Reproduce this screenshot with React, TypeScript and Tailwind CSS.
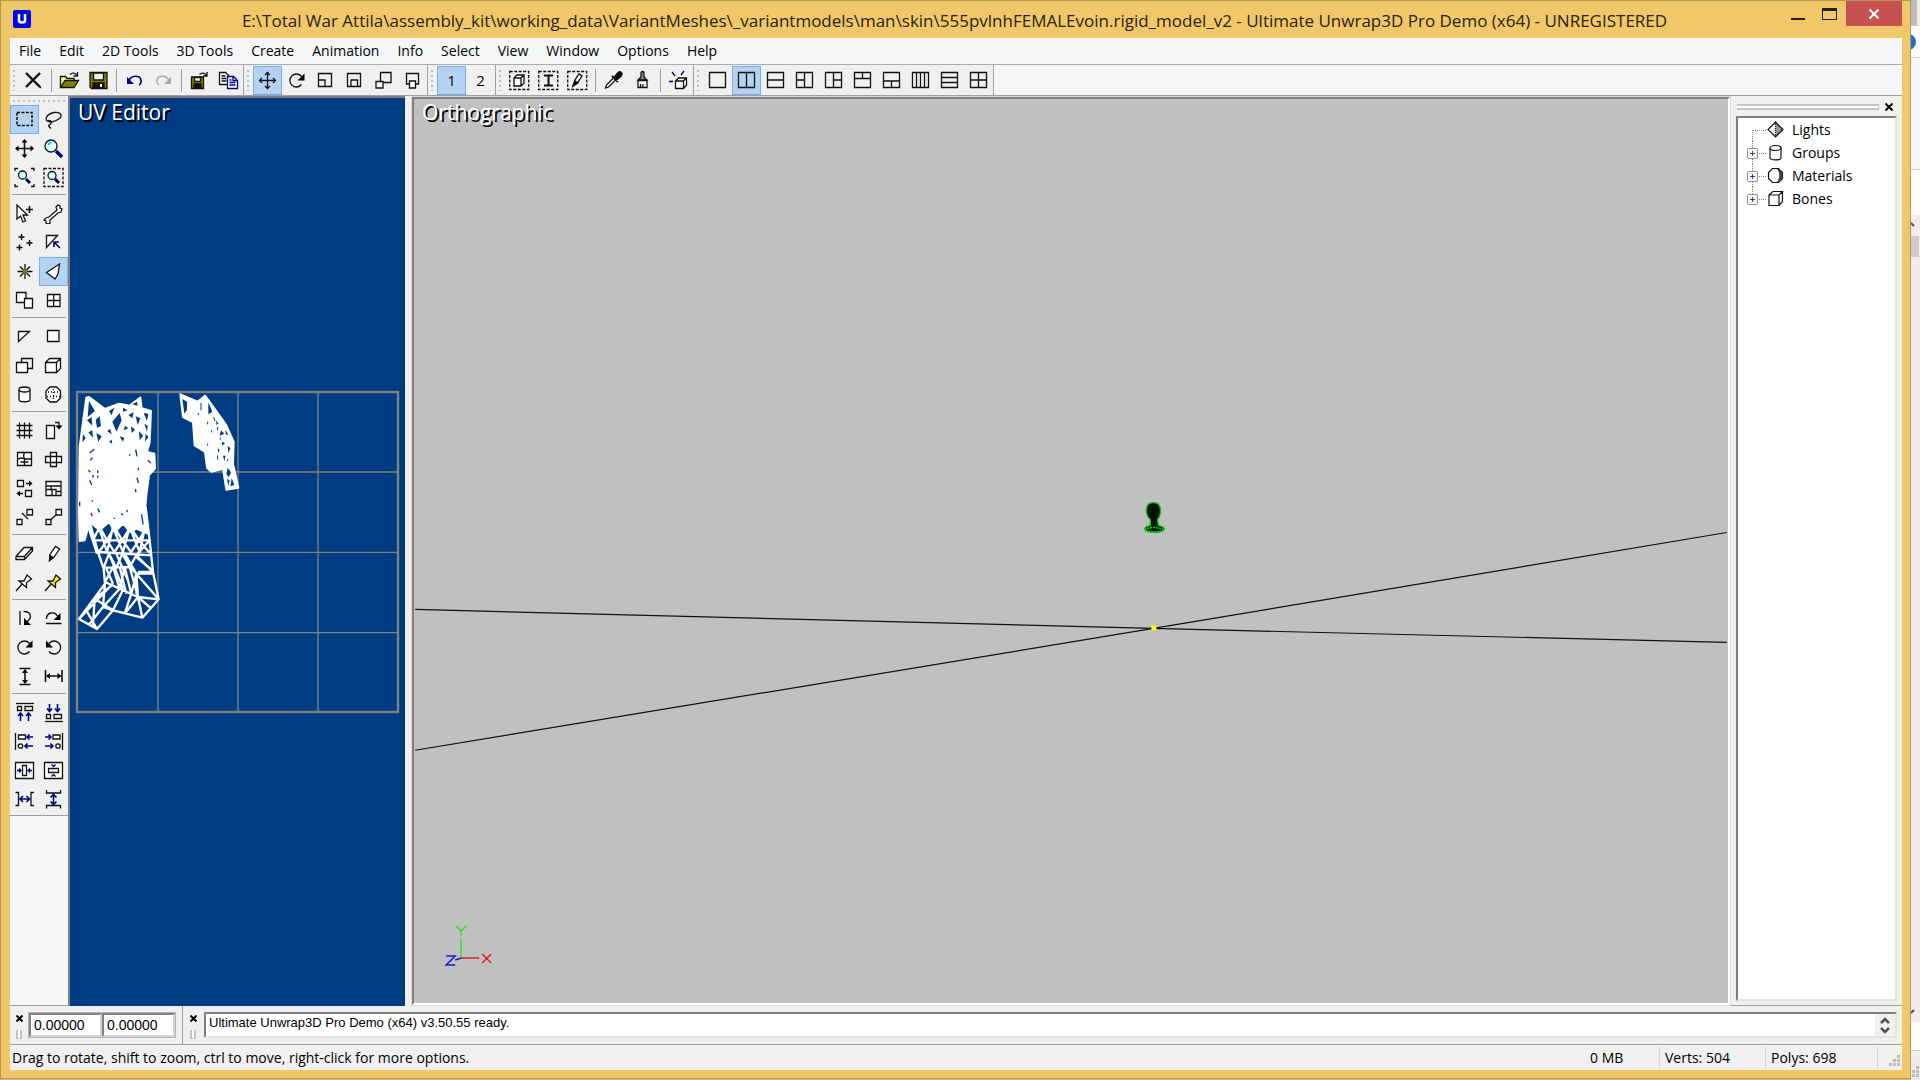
import { ReactNode, useState } from "react";

const UI_FONT = "font-['Open_Sans','Noto_Sans',sans-serif]";

const menus = [
  "File",
  "Edit",
  "2D Tools",
  "3D Tools",
  "Create",
  "Animation",
  "Info",
  "Select",
  "View",
  "Window",
  "Options",
  "Help",
];

const NAVY = "#00007f";
const OLIVE = "#808000";

// every icon is drawn on a 21x21 grid
const icons: Record<string, ReactNode> = {
  delete: (
    <>
      <path d="M3 3L17 17M17 3L3 17" strokeWidth="2.4" />
      <path d="M16 16l2 2" />
    </>
  ),
  open: (
    <>
      <path d="M1.5 17V6.500h5l1.500 2h7v2" fill="#ffff99" />
      <path d="M1.500 17.500L6 10.500h13.500L15 17.500z" fill={OLIVE} />
      <path d="M11 4.500c2-2 5-2 7 1M18.500 2v4h-4" />
    </>
  ),
  save: (
    <>
      <path d="M2 2.500h17v16H3.500L2 17z" fill={OLIVE} />
      <path d="M5.500 3h10v7h-10z" fill="#f0f0f0" />
      <path d="M5 13h11v5H5z" fill="#111" />
      <path d="M13 14v3" stroke="#fff" strokeWidth="2" />
    </>
  ),
  undo: (
    <>
      <path d="M5 10c3-5 11-5 12 0c.5 2-.5 4-2 5" stroke={NAVY} strokeWidth="1.6" />
      <path d="M3 7v7h7z" fill={NAVY} stroke="none" />
    </>
  ),
  redo: (
    <>
      <path d="M16 10c-3-5-11-5-12 0c-.5 2 .5 4 2 5" stroke="#a8a8a8" strokeWidth="1.4" />
      <path d="M18 7v7h-7z" fill="#a8a8a8" stroke="none" />
    </>
  ),
  saveAs: (
    <>
      <path d="M2.500 7h12v11.500h-12z" fill={OLIVE} />
      <path d="M5.500 7.500h6v4h-6z" fill="#f0f0f0" />
      <path d="M5 14h7v4H5z" fill="#111" />
      <path d="M10.500 4.500c2-2 5-2 7 1M18 2v4h-4" />
    </>
  ),
  copy: (
    <>
      <path d="M1.500 2.500h6l3 3v9h-9z" fill="#fff" />
      <path d="M3.500 6h4M3.500 8.500h5M3.500 11h5" />
      <path d="M9.500 6.500h6l4 4v8h-10z" fill="#fff" stroke={NAVY} />
      <path d="M15 6.500v4h4M11.500 10h2M11.500 12.500h6M11.500 15h6" stroke={NAVY} />
    </>
  ),
  move: (
    <>
      <path d="M10.500 3v15M3 10.500h15" />
      <path d="M8 5l2.500-2.500L13 5M8 16l2.500 2.500L13 16M5 8l-2.500 2.500L5 13M16 8l2.500 2.500L16 13" />
    </>
  ),
  rotate: (
    <>
      <path d="M15.500 14.500a6.500 6.500 0 1 1 0-8" />
      <path d="M18.500 3.500v7h-7z" fill="#000" stroke="none" />
    </>
  ),
  scaleCorner: <path d="M3.500 3.500h13v13h-13zM3.500 10h6.500v6.500" />,
  scaleInner: <path d="M3.500 3.500h13v13h-13zM7 16.500V10h6.500v6.500" />,
  scaleOut: (
    <>
      <path d="M7.500 2.500h10.500v10H7.500z" />
      <path d="M3 11.500h7v6.500H3z" fill="#fff" />
    </>
  ),
  scaleDown: (
    <>
      <path d="M4.500 3.500h12v10.500h-12z" />
      <path d="M7.500 11h6v7h-6z" fill="#fff" />
    </>
  ),
  selCube: (
    <>
      <path d="M.7 1.500h19v18h-19z" strokeDasharray="3 1.500" />
      <path d="M5 8l3-3h7v8l-3 3H5zM5 8h7v8M12 8l3-3" fill="#fff" />
    </>
  ),
  selEdge: (
    <>
      <path d="M.7 1.500h19v18h-19z" strokeDasharray="3 1.500" />
      <path d="M6 5.500h9M10.500 5.500v10M6 15.500h9" strokeWidth="2" />
    </>
  ),
  selPaint: (
    <>
      <path d="M.7 1.500h19v18h-19z" strokeDasharray="3 1.500" />
      <path d="M6 16l2-6 4-6 3 2-4 6z" fill="#fff" />
      <path d="M6 16l2-5 3 2z" fill="#000" />
    </>
  ),
  picker: (
    <>
      <path d="M2.500 18l1-3 7-7 2 2-7 7z" fill="#fff" />
      <path d="M9 6l6 6M11 8l4-5c2-2 5 0 3 3l-5 4z" fill="#000" strokeWidth="2" />
    </>
  ),
  brush: (
    <>
      <path d="M9 7V3c0-2 3-2 3 0v4l3 3H6z" fill="#888" />
      <path d="M6 10.500h9v7H6z" fill="#fff" />
      <path d="M8.500 14v3M11 14v3" />
    </>
  ),
  explode: (
    <>
      <path d="M7.500 11l3-3h8v7l-3 3.500h-8zM7.500 11h8v7.500M15.500 11l3-3" fill="#fff" />
      <path d="M1 11.500h4M4 2l3 4M16 1l-3 4" stroke={NAVY} />
    </>
  ),
  lay1: <path d="M2.500 2.500h16v15h-16z" />,
  lay2: <path d="M2.500 2.500h16v15h-16zM10.500 2.500v15" />,
  lay3: <path d="M2.500 2.500h16v15h-16zM2.500 10h16" />,
  lay4: <path d="M2.500 2.500h16v15h-16zM10.500 2.500v15M2.500 10h8" />,
  lay5: <path d="M2.500 2.500h16v15h-16zM10.500 2.500v15M10.500 10h8" />,
  lay6: <path d="M2.500 2.500h16v15h-16zM2.500 8.500h16M10.500 2.500v6" />,
  lay7: <path d="M2.500 2.500h16v15h-16zM2.500 11h16M10.500 11v6.500" />,
  lay8: <path d="M2.500 2.500h16v15h-16zM6.500 2.500v15M10.500 2.500v15M14.500 2.500v15" />,
  lay9: <path d="M2.500 2.500h16v15h-16zM2.500 7.500h16M2.500 12.500h16" />,
  lay10: <path d="M2.500 2.500h16v15h-16zM10.500 2.500v15M2.500 10h16" />,
  marquee: <path d="M3 3.500h15v13H3z" strokeDasharray="3 1.400" strokeWidth="1.500" />,
  lasso: (
    <path d="M7 13c-7-1-4-8 4-9.500c8-1 9 4 4 7c-3 2-8 3-9 2c-2-2 4-1 2 2c-1 2-3 1-2 3l2 2" />
  ),
  pan: (
    <>
      <path d="M10.500 2v17M2 10.500h17" strokeWidth="1.600" />
      <path d="M7.500 4.500h6l-3-3.500zM7.500 16.500h6l-3 3.500zM4.500 7.500v6L1 10.500zM16.500 7.500v6l3.500-3z" fill="#000" stroke="none" />
    </>
  ),
  zoom: (
    <>
      <circle cx="8" cy="8" r="6" fill="#e8ffff" />
      <path d="M5 7l3-3" stroke="#00d0d8" strokeWidth="2" />
      <path d="M13 13l6 6" stroke={NAVY} strokeWidth="3.400" />
    </>
  ),
  zoomFit: (
    <>
      <path d="M1 4V1.500h3M17 1.500h3V4M1 17v2.500h3M17 19.500h3V17" />
      <circle cx="8.500" cy="8" r="4" fill="#c8ffff" />
      <path d="M12 12l4 4" stroke={NAVY} strokeWidth="3" />
    </>
  ),
  zoomSel: (
    <>
      <path d="M1 1.500h19v18H1z" strokeDasharray="3 1.500" />
      <circle cx="9" cy="8.500" r="4" fill="#c8ffff" />
      <path d="M12 12l4 4" stroke={NAVY} strokeWidth="3" />
    </>
  ),
  arrowPlus: (
    <>
      <path d="M3 2v14l3.500-3 2.500 6 2.500-1-2.500-6h4.500z" fill="#fff" />
      <path d="M15.500 3v7M12 6.500h7" strokeWidth="1.600" />
    </>
  ),
  bone: (
    <path
      d="M3 15l3-1 8-7-1-3 2-2 2 1 0 2 2 1-1 3-3 1-8 7 0 3-2 1-2-1 0-2-2-1z"
      fill="#fff"
    />
  ),
  points: <path d="M7.500 2v6M4.500 5h6M5.500 12.500v6M2.500 15.500h6M15.500 8v6M12.500 11h6" strokeWidth="1.500" />,
  triPick: (
    <>
      <path d="M3.500 15.500v-12h11z" fill="#fff" />
      <path d="M17 16l-5-5M11 15v-5h5" stroke={NAVY} strokeWidth="1.600" />
    </>
  ),
  star: (
    <>
      <path d="M11 3v15M3.500 10.500h15M6 5.500l10 10M16 5.500l-10 10" />
      <circle cx="11" cy="10.500" r="2.200" fill={OLIVE} stroke="none" />
    </>
  ),
  face: <path d="M3.500 11.500L16.500 3l-1.500 10-3 5z" fill="#fff" />,
  overlap: (
    <>
      <path d="M2.500 2.500h9.500v10H2.500z" fill="#fff" />
      <path d="M10.500 8.500h8v9.500h-8z" fill="#fff" />
    </>
  ),
  grid4: <path d="M4.500 4.500h12.500v12H4.500zM10.700 4.500v12M4.500 10.500h12.500" fill="#fff" />,
  tri: <path d="M4.500 15.500v-10h11z" fill="#fff" />,
  square: <path d="M4.500 4.500H16v11H4.500z" fill="#fff" />,
  stack: (
    <>
      <path d="M7.500 3.500h11v10h-11z" />
      <path d="M2.500 7.500h11v10h-11z" fill="#fff" />
    </>
  ),
  cube: <path d="M2.500 7.500l4-4h11v10l-4 4h-11zM2.500 7.500h11v10M13.500 7.500l4-4" fill="#fff" />,
  cyl: (
    <>
      <path d="M5 5.500v10c0 3 11 3 11 0v-10" fill="#fff" />
      <ellipse cx="10.500" cy="5.500" rx="5.500" ry="2.500" fill="#fff" />
    </>
  ),
  sphere: (
    <>
      <path d="M7 3h6.500l4 4v7l-4 4H7l-4-4V7z" fill="#fff" />
      <path d="M5 8h12M10.500 5v13M4 12.500h13" strokeDasharray="1 2" />
    </>
  ),
  hash: <path d="M2.500 5.500h16M2.500 10.500h16M2.500 15.500h16M5.500 2.500v16M10.500 2.500v16M15.500 2.500v16" />,
  sendRight: (
    <>
      <path d="M3.500 5.500h8v13h-8z" fill="#fff" />
      <path d="M12 2.500h4v5" />
      <path d="M12.500 5.500h7l-3.500 4z" fill="#000" stroke="none" />
    </>
  ),
  planar: <path d="M3.500 3.500h14v13h-14zM3.500 10l4-1 3 1h7M10.500 3.500l-1 3 1 4v6M6.500 13h8" fill="#fff" />,
  cross: <path d="M7.500 3.500h6v14h-6zM2.500 7.500h16v6h-16z" fill="#fff" />,
  swap: (
    <>
      <path d="M3.500 2.500h6v6h-6zM11.500 12.500h6v6h-6z" fill="#fff" />
      <path d="M12 5.500h5M4 15.500h5" strokeWidth="1.600" />
      <path d="M15 2.500v6l3.500-3zM6 12.500v6l-3.500-3z" fill="#000" stroke="none" />
    </>
  ),
  pack: <path d="M3 3.500h15v14H3zM3 8h15M3 11.500h6v6M9 11.500h4v6M13 13.500h5M8 8v3.500" fill="#fff" />,
  split: (
    <>
      <path d="M3 12.500h5v5H3zM13 2.500h5.500v5.500H13z" fill="#fff" />
      <path d="M8 6l6 6" />
    </>
  ),
  link: (
    <>
      <path d="M3 12.500h5v5H3zM13 2.500h5.500v5.500H13z" fill="#fff" />
      <path d="M8 12.500L13 8" />
    </>
  ),
  eraser: (
    <path d="M2 13.500l8-9h8.500v3.500l-8 8.500H2zM2 13.500h8.500v3M10.500 13.500l8-9" fill="#fff" />
  ),
  pencil: (
    <>
      <path d="M6.500 17.500l.5-6L12.500 3.500l4 2.500-5.500 8z" fill="#fff" />
      <path d="M6.500 17.500l.5-5 3 2z" fill="#000" />
    </>
  ),
  pin: (
    <>
      <path d="M2 19l7-8" />
      <path d="M5 9h5l3-6 4.500 4-5 3.500v5z" fill="#fff" />
    </>
  ),
  pinYellow: (
    <>
      <path d="M2 19l7-8" />
      <path d="M5 9h5l3-6 4.500 4-5 3.500v5z" fill="#ffee00" />
    </>
  ),
  flipV: (
    <>
      <path d="M6 3v14M9.500 3.500c5 0 7 2 7 5s-2 3-4 6" />
      <path d="M10 10v7h7z" fill="#000" stroke="none" />
    </>
  ),
  flipH: (
    <>
      <path d="M3 15.500h15.500M3.500 11c0-7 8-8 11-3" />
      <path d="M17.500 5v7h-7z" fill="#000" stroke="none" />
    </>
  ),
  rotCcw: (
    <>
      <path d="M6 14.500a6.500 6.500 0 1 0 0-8" />
      <path d="M3 3.500v7h7z" fill="#000" stroke="none" />
    </>
  ),
  sizeV: (
    <>
      <path d="M5.500 2.500h11M5.500 18.500h11M11 4v13" strokeWidth="1.600" />
      <path d="M8 7h6l-3-4zM8 14h6l-3 4z" fill="#000" stroke="none" />
    </>
  ),
  sizeH: (
    <>
      <path d="M2.500 4v12M19 4v12M4 10h13" strokeWidth="1.600" />
      <path d="M7 7v6l-4-3zM14.500 7v6l4-3z" fill="#000" stroke="none" />
    </>
  ),
  alignTop: (
    <>
      <path d="M2 1.500h18" />
      <path d="M3.500 4.500h4v4h-4zM11 4.500h7.500v4H11z" fill="#fff" />
      <path d="M6.500 12v7M14.500 12v7M4 14l2.500-3 2.500 3M12 14l2.500-3 2.500 3" stroke={NAVY} strokeWidth="1.600" />
    </>
  ),
  alignBottom: (
    <>
      <path d="M2 19.500h18" />
      <path d="M3.500 12.500h4v4h-4zM11 12.500h7.500v4H11z" fill="#fff" />
      <path d="M6.500 2v7M14.500 2v7M4 6.500l2.500 3 2.500-3M12 6.500l2.500 3 2.500-3" stroke={NAVY} strokeWidth="1.600" />
    </>
  ),
  alignLeft: (
    <>
      <path d="M1.500 2v17" />
      <path d="M4.500 4h7v4h-7z" fill="#fff" />
      <circle cx="6.500" cy="15" r="2.200" fill="#fff" />
      <path d="M13 6h6M11 15h8M15.500 3.500L13 6l2.500 2.500M13.500 12.500L11 15l2.500 2.500" stroke={NAVY} strokeWidth="1.600" />
    </>
  ),
  alignRight: (
    <>
      <path d="M19.500 2v17" />
      <path d="M10 4h7v4h-7z" fill="#fff" />
      <circle cx="15" cy="15" r="2.200" fill="#fff" />
      <path d="M2 6h6M2 15h8M5.500 3.500L8 6 5.500 8.500M7.500 12.500L10 15l-2.500 2.500" stroke={NAVY} strokeWidth="1.600" />
    </>
  ),
  centerH: (
    <>
      <path d="M1.500 2.500h18v16h-18zM8.500 5.500h4v10h-4z" fill="#fff" />
      <path d="M3 10.500h3M15 10.500h3M5 8.500l2 2-2 2M16 8.500l-2 2 2 2" stroke={NAVY} />
    </>
  ),
  centerV: (
    <>
      <path d="M1.500 2.500h18v16h-18zM5.500 8.500h10v4h-10z" fill="#fff" />
      <path d="M8.500 4.500l2 2 2-2M8.500 16.500l2-2 2 2" stroke={NAVY} />
    </>
  ),
  spaceH: (
    <>
      <path d="M1.500 3.500h3v13h-3M20 3.500h-3v13h3" />
      <path d="M6 10h9M9 7l-3 3 3 3M12.500 7l3 3-3 3" stroke={NAVY} strokeWidth="1.600" />
    </>
  ),
  spaceV: (
    <>
      <path d="M3.500 1v3h14V1M3.500 19.500v-3h14v3" />
      <path d="M10.500 6v9M7.500 8.500l3-3 3 3M7.500 12.500l3 3 3-3" stroke={NAVY} strokeWidth="1.600" />
    </>
  ),
};

const Icon = ({ name }: { name: string }) => (
  <svg
    className="h-[21px] w-[21px] shrink-0"
    viewBox="0 0 21 21"
    fill="none"
    stroke="#111"
    strokeWidth="1.3"
  >
    {icons[name]}
  </svg>
);

interface ToolButtonProps {
  name: string;
  active?: boolean;
}

const ToolButton = ({ name, active }: ToolButtonProps) => (
  <button
    type="button"
    aria-label={name}
    aria-pressed={!!active}
    className={`flex h-[29px] w-[29px] shrink-0 items-center justify-center text-[15px] text-black ${
      active ? "border border-[#78aee5] bg-[#b4d3f2]" : ""
    }`}
  >
    {icons[name] ? <Icon name={name} /> : name}
  </button>
);

const Grip = () => (
  <div className="my-1 ml-[3px] mr-1 w-[2px] shrink-0 bg-[repeating-linear-gradient(to_bottom,#bdbdbd_0_2px,transparent_2px_5px)]" />
);

// "|" is a separator
const bands: string[][] = [
  ["delete", "|", "open", "save", "|", "undo", "redo", "|", "saveAs", "copy"],
  ["move", "rotate", "scaleCorner", "scaleInner", "scaleOut", "scaleDown"],
  ["1", "2"],
  ["selCube", "selEdge", "selPaint", "|", "picker", "brush", "|", "explode"],
  ["lay1", "lay2", "lay3", "lay4", "lay5", "lay6", "lay7", "lay8", "lay9", "lay10"],
];

const activeTools = ["move", "1", "lay2", "marquee", "face"];

const sideGroups: string[][] = [
  ["marquee", "lasso", "pan", "zoom", "zoomFit", "zoomSel"],
  ["arrowPlus", "bone", "points", "triPick", "star", "face", "overlap", "grid4"],
  ["tri", "square", "stack", "cube", "cyl", "sphere"],
  ["hash", "sendRight", "planar", "cross", "swap", "pack", "split", "link"],
  ["eraser", "pencil", "pin", "pinYellow"],
  ["flipV", "flipH", "rotate", "rotCcw", "sizeV", "sizeH"],
  ["alignTop", "alignBottom", "alignLeft", "alignRight", "centerH", "centerV", "spaceH", "spaceV"],
];

const TitleBar = () => (
  <header className="flex h-[37px] shrink-0 items-start">
    <svg className="mt-[9px] ml-[3px] h-[18px] w-[18px]" viewBox="0 0 18 18">
      <rect width="18" height="18" rx="2" fill="#0000e6" />
      <path d="M6 4v6.500q0 2 3 2t3-2V4" fill="none" stroke="#fff" strokeWidth="2.500" />
    </svg>
    <h1 className="flex-1 pt-[6px] pl-[96px] text-center text-[17px] leading-[28px] whitespace-nowrap text-[#2b2313]">
      E:\Total War Attila\assembly_kit\working_data\VariantMeshes\_variantmodels\man\skin\555pvlnhFEMALEvoin.rigid_model_v2
      - Ultimate Unwrap3D Pro Demo (x64) - UNREGISTERED
    </h1>
    <div className="flex">
      <button type="button" aria-label="Minimize" className="flex h-[25px] w-[31px] items-center justify-center">
        <span className="mt-[10px] h-[2px] w-[14px] bg-[#222]" />
      </button>
      <button type="button" aria-label="Maximize" className="flex h-[25px] w-[33px] items-center justify-center">
        <span className="h-[12px] w-[15px] border border-t-[3px] border-[#222]" />
      </button>
      <button type="button" aria-label="Close" className="flex h-[25px] w-[56px] items-center justify-center bg-[#c75050]">
        <svg className="h-[10px] w-[12px]" viewBox="0 0 12 10" stroke="#fff" strokeWidth="2">
          <path d="M1.500 0.500l9 9M10.500 .5l-9 9" />
        </svg>
      </button>
    </div>
  </header>
);

const SideBar = () => (
  <aside className="flex w-[58px] shrink-0 flex-col border-b border-[#a0a0a0] bg-[#f5f6f8]">
    <div className="border-b border-[#a0a0a0] bg-[#f0f0f0] pb-px">
      <div className="mx-[3px] mt-1 mb-[3px] h-[2px] bg-[repeating-linear-gradient(to_right,#bdbdbd_0_2px,transparent_2px_5px)]" />
      {sideGroups.map((group, i) => (
        <div key={i}>
          {i > 0 && <div className="mx-[2px] mt-[2px] mb-1 h-px bg-[#a0a0a0]" />}
          <div className="grid grid-cols-2">
            {group.map((name) => (
              <ToolButton key={name} name={name} active={activeTools.includes(name)} />
            ))}
          </div>
        </div>
      ))}
    </div>
  </aside>
);

const bodyHoles =
  "M58 62l18 30-22 18zM52 120l14-10 2 26zM78 118l12-10 4 30-12 4zM40 160l8 14-10 12zM56 156l12-6 2 22zM80 158l16 10-10 16zM118 92l16-10-8 22zM128 124l22-26 6 22-16 34zM112 152l10-6 4 16zM160 82l14 8-14 4zM188 72l14-8 2 12zM176 104l16-8-4 18zM198 108l14 6-8 20zM222 98l14 2-4 22zM224 130l10 6-2 18zM208 152l12 14-10 14zM184 138l12 10-10 10zM166 136l10 8-14 6zM150 168l14 4-4 12zM118 184l8-6 2 12zM228 160l8 10-10 14z";

const bodySpecks =
  "M60 218l14-12M62 240l6-8M56 270l6 6M60 300l6 14M70 284v8M84 270v8M84 286v6M198 208l4 20M180 222v4M206 262v8M202 292l4 16M198 326v10M234 240l10 8M30 364v14M68 360v4M84 384l6 12M172 388v8M154 400l6 4M134 412v4M64 398l4 10M216 402l4 30";

// shin and foot part of the unwrapped body
const legWire =
  "M60 425L85 515L102 565L106 610L28 716L82 746L130 690L218 712L267 657L250 575L240 480L228 380M50 420L82 520M70 480H240M88 515L246 525M102 562L180 560L200 580H250M106 605L150 625L205 650L267 657M84 430L112 515L130 440L160 515L180 440L210 515L226 440M70 480L90 440L112 480L134 440L158 480L182 440L208 480L228 445M88 515L112 480L134 515L158 480L184 515L208 480L240 518M102 562L118 520L140 562L158 520L180 560L200 525L250 575M106 605L130 560L150 625L165 560L185 640L200 580L205 650L218 712M118 520L160 625M140 520L175 600M165 520L200 580V640M200 580L267 657M110 565L130 610M150 560L170 640M180 560L205 650M200 530L250 572M106 605L100 680L130 690M130 612L75 655L70 735M150 625L100 680L60 730M160 628L130 690L82 746M185 640L165 700M205 650L165 700M205 650L245 685M28 716L120 620M75 655L130 690M50 690L82 746M240 480L200 525M250 575H205";

const UvEditor = () => (
  <section className="relative flex w-[337px] shrink-0 items-center justify-center border-t-2 border-l-2 border-[#808080] bg-[#003c82]">
    <h2 className="absolute top-0 left-[8px] text-[21px] leading-[28px] text-white [text-shadow:2px_2px_0_#000]">
      UV Editor
    </h2>
    <svg className="h-[320px] w-[321px] overflow-visible" viewBox="22 35 963 960" fill="none">
      <g stroke="#808080">
        <path d="M265 35V995M505 35V995M745 35V995M22 275H985M22 516H985M22 757H985" strokeWidth="4" />
        <rect x="22" y="35" width="963" height="960" strokeWidth="7" />
      </g>
      <g stroke="#fff" strokeWidth="6" strokeLinejoin="round">
        <path
          d="M50 52L58 50L106 86L148 70L180 76L212 52L216 84L244 92L240 185L232 215L254 220L256 265L238 284L230 345L226 390L234 460L200 445L182 455L160 430L136 455L118 425L90 450L60 425L45 480L30 482L28 400L30 200L42 110Z"
          fill="#fff"
        />
        <path d={bodyHoles} fill="#003c82" stroke="none" />
        <path d={bodySpecks} stroke="#003c82" strokeWidth="4" />
        <path d={legWire} strokeWidth="7" />
      </g>
      <g stroke="#fff" strokeWidth="6" strokeLinejoin="round">
        <path
          d="M332 42L384 64L406 46L440 92L470 135L492 185L490 250L506 322L470 328L460 265L425 274L412 262L406 215L375 195L370 125L340 110Z"
          fill="#fff"
        />
        <path
          d="M338 56l14 8 0 24-8 12zM416 66l12 28-12 8zM454 150l10 10-14 6zM440 120l6 10-6 4zM468 148l8 16-8-2zM456 184l10 4-8 8zM474 196l8 8-6 14zM460 226l8 0-4 16zM474 262l10 14-6 14-8-8zM472 296l8 4-4 16zM486 294l8 20-12 4zM444 204l6 4-4 10z"
          fill="#003c82"
          stroke="none"
        />
        <path
          d="M394 68v22M386 98v6M414 124v8M432 110l4 12M426 150v6M444 140v10M452 172v6M414 190v6M444 226v12M474 236v6"
          stroke="#003c82"
          strokeWidth="3"
        />
      </g>
    </svg>
  </section>
);

const Viewport = () => (
  <section className="relative mt-px mb-px ml-[7px] min-w-0 flex-1 border-2 border-t-[#808080] border-r-white border-b-white border-l-[#808080] bg-[#c0c0c0] outline outline-[#dcdcdc]">
    <h2 className="absolute top-0 left-[8px] text-[21px] leading-[26px] text-white [text-shadow:2px_2px_0_#000]">
      Orthographic
    </h2>
    <svg className="absolute inset-0 h-full w-full" viewBox="0 0 1313 905" fill="none">
      <path d="M0 511L739 530L1313 544M0 652L739 530L1313 434" stroke="#111" strokeWidth="1.200" />
      <rect x="737" y="527" width="5" height="5" fill="#ff0" />
      {/* bust model */}
      <path
        d="M732 412q0-8 7-8t7 8q0 6-3 9l1 6q6 1 6 4q-3 3-10 3t-10-3q0-3 6-4l0-6q-4-3-4-9z"
        fill="#001200"
        stroke="#00c010"
        strokeWidth="1.300"
      />
      <path d="M730 431q9-4 19 0M731 432q9 3 18 0" stroke="#00e018" strokeWidth="1.500" strokeDasharray="2 1" />
      {/* axis gizmo */}
      <g strokeWidth="1.500">
        <path d="M46 860V841M41 828l5 5 5-5M46 833v5" stroke="#30e030" />
        <path d="M46 860h18M67 856l9 9M76 856l-9 9" stroke="#dc2020" />
        <path d="M46 860l-6 2M31 858h9l-9 9h9" stroke="#1818dc" />
      </g>
    </svg>
  </section>
);

const treeItems = [
  { label: "Lights", expandable: false },
  { label: "Groups", expandable: true },
  { label: "Materials", expandable: true },
  { label: "Bones", expandable: true },
];

const treeIcons: Record<string, ReactNode> = {
  Lights: (
    <>
      <path d="M8.500 1l7.500 7.500-7.500 7.500L1 8.500z" fill="#fff" />
      <path d="M8.500 2l7 6.500-7 6.500z" fill="#999" strokeDasharray="1 1" />
    </>
  ),
  Groups: (
    <>
      <path d="M3 4v10c0 2.500 11 2.500 11 0V4" fill="#fff" />
      <ellipse cx="8.500" cy="4" rx="5.500" ry="2.500" fill="#fff" />
    </>
  ),
  Materials: (
    <>
      <path d="M5.500 1.500h6l4 4v6l-4 4h-6l-4-4v-6z" fill="#fff" />
      <path d="M10 2c3 4 3 9 0 13l2 0 3.500-4V6L12 2z" fill="#444" stroke="none" />
    </>
  ),
  Bones: <path d="M2 5l4-3.500h9.500v10L12 15.500H2zM2 5h10v10.500M12 5l3.500-3.500" fill="#fff" />,
};

const TreePanel = () => (
  <aside className="flex w-[172px] shrink-0 flex-col border-b border-[#a0a0a0] bg-[#f0f0f0] pb-[4px] pl-[6px]">
    <div className="flex h-[20px] shrink-0 items-center gap-[6px] pt-px pr-[9px] pl-px">
      <div className="h-[6px] flex-1 border-y-2 border-r border-[#c4c4c4] bg-white" />
      <button type="button" aria-label="Close panel" className="h-[8px] w-[8px]">
        <svg viewBox="0 0 8 8" stroke="#000" strokeWidth="2">
          <path d="M.5 .5l7 7M7.500 .5l-7 7" />
        </svg>
      </button>
    </div>
    <ul className="mr-[5px] flex-1 border-2 border-t-[#808080] border-r-[#e3e3e3] border-b-[#e3e3e3] border-l-[#808080] bg-white">
      {treeItems.map((item, i) => (
        <li key={item.label} className="flex h-[23px] items-center pl-[9px]">
          <svg className="h-[23px] w-[20px] shrink-0" viewBox="0 0 20 23" fill="none">
            <path
              d={i === 0 ? "M5.500 12V23M6 12.500H20" : i === 3 ? "M5.500 0V12M6 12.500H20" : "M5.500 0V23M6 12.500H20"}
              stroke="#888"
              strokeDasharray="1 1"
            />
            {item.expandable && (
              <>
                <rect x=".5" y="7.500" width="10" height="10" rx="1" fill="#f4f4f4" stroke="#919191" />
                <path d="M3 12.500h5M5.500 10v5" stroke="#2b4aa0" />
              </>
            )}
          </svg>
          <svg className="h-[17px] w-[17px] shrink-0" viewBox="0 0 17 17" fill="none" stroke="#111" strokeWidth="1.200">
            {treeIcons[item.label]}
          </svg>
          <span className="pl-2 text-[14px] leading-[22px]">{item.label}</span>
        </li>
      ))}
    </ul>
  </aside>
);

const DockHandle = () => (
  <div className="flex w-[18px] shrink-0 flex-col items-center gap-[8px] pt-[9px]">
    <button type="button" aria-label="Close bar" className="h-[7px] w-[7px]">
      <svg viewBox="0 0 7 7" stroke="#000" strokeWidth="2">
        <path d="M.5 .5l6 6M6.500 .5l-6 6" />
      </svg>
    </button>
    <span className="h-[9px] w-[6px] border-x-2 border-b border-[#c4c4c4] bg-white" />
  </div>
);

const App = () => {
  const [u, setU] = useState("0.00000");
  const [v, setV] = useState("0.00000");

  return (
    <div className={`flex h-screen w-full overflow-hidden bg-[#eeeeee] text-[14px] text-black ${UI_FONT}`}>
      <div className="flex min-w-0 flex-1 flex-col border-b border-[#c9b88c]">
        <main className="flex min-h-0 flex-1 flex-col border border-[#b7964f] bg-[#f0c869] pr-2 pb-2 pl-[9px]">
          <TitleBar />
          <div className="flex min-h-0 flex-1 flex-col bg-[#f0f0f0]">
            <nav className="flex h-[27px] shrink-0 items-center gap-[18px] border-b border-[#a9acb0] bg-[#f5f6f8] pl-[9px]">
              {menus.map((menu) => (
                <button key={menu} type="button" className="leading-[20px]">
                  {menu}
                </button>
              ))}
            </nav>
            <div className="flex h-[31px] shrink-0 border-b border-[#a0a0a0] bg-[#f5f6f8]">
              {bands.map((band, i) => (
                <div key={i} className="flex border-r border-[#a0a0a0] bg-[#f0f0f0] pt-px">
                  <Grip />
                  {band.map((name, j) =>
                    name === "|" ? (
                      <div key={j} className="mx-[3px] my-[3px] w-px bg-[#a0a0a0]" />
                    ) : (
                      <ToolButton key={j} name={name} active={activeTools.includes(name)} />
                    )
                  )}
                </div>
              ))}
            </div>

            <div className="flex min-h-0 flex-1">
              <SideBar />
              <UvEditor />
              <Viewport />
              <TreePanel />
            </div>

            <div className="flex h-[39px] shrink-0 border-b border-[#a0a0a0]">
              <DockHandle />
              <div className="mt-[6px] mb-[6px] flex border border-[#b4b4b4] font-['Liberation_Sans',Arial,sans-serif]">
                <input
                  aria-label="U"
                  value={u}
                  onChange={(e) => setU(e.target.value)}
                  className="w-[73px] border-2 border-t-[#808080] border-r-[#d4d4d4] border-b-[#d4d4d4] border-l-[#808080] bg-white pl-[3px] text-[14px]"
                />
                <input
                  aria-label="V"
                  value={v}
                  onChange={(e) => setV(e.target.value)}
                  className="w-[73px] border-2 border-t-[#808080] border-r-[#d4d4d4] border-b-[#d4d4d4] border-l-[#808080] bg-white pl-[3px] text-[14px]"
                />
              </div>
              <div className="mr-px ml-[6px] w-px bg-[#a0a0a0]" />
              <DockHandle />
              <div className="mt-[6px] mr-[5px] mb-[6px] ml-[2px] flex flex-1 border-2 border-t-[#808080] border-r-[#e3e3e3] border-b-[#e3e3e3] border-l-[#808080] bg-white">
                <p className="flex-1 pl-[3px] font-['Liberation_Sans',Arial,sans-serif] text-[13px] leading-[18px]">
                  Ultimate Unwrap3D Pro Demo (x64) v3.50.55 ready.
                </p>
                <div className="flex w-[20px] flex-col items-center justify-center gap-[3px] bg-[#f0f0f0]">
                  <button type="button" aria-label="Scroll up">
                    <svg className="h-[7px] w-[10px]" viewBox="0 0 10 7" fill="none" stroke="#505050" strokeWidth="2.500">
                      <path d="M1 6l4-4 4 4" />
                    </svg>
                  </button>
                  <button type="button" aria-label="Scroll down">
                    <svg className="h-[7px] w-[10px]" viewBox="0 0 10 7" fill="none" stroke="#505050" strokeWidth="2.500">
                      <path d="M1 1l4 4 4-4" />
                    </svg>
                  </button>
                </div>
              </div>
            </div>

            <footer className="flex h-[25px] shrink-0 items-center pl-[2px] leading-[22px]">
              <span className="flex-1">Drag to rotate, shift to zoom, ctrl to move, right-click for more options.</span>
              <span className="w-[70px] border-r border-[#d7d7d7]">0 MB</span>
              <span className="w-[106px] border-r border-[#d7d7d7] pl-[5px]">Verts: 504</span>
              <span className="w-[112px] border-r border-[#d7d7d7] pl-[5px]">Polys: 698</span>
              <svg className="h-[18px] w-[24px]" viewBox="0 0 24 18" fill="#bcbcbc">
                <path d="M19 6h3v3h-3zM15 10h3v3h-3zM19 10h3v3h-3zM11 14h3v3h-3zM15 14h3v3h-3zM19 14h3v3h-3z" />
              </svg>
            </footer>
          </div>
        </main>
      </div>

      {/* edge of the window behind */}
      <div className="flex w-[9px] shrink-0 flex-col">
        <div className="mr-[3px] h-[25px] bg-[#bcbcbc]" />
        <div className="flex h-[33px] items-center overflow-hidden border-y border-[#d0d0d0] bg-white">
          <span className="-ml-[11px] h-[16px] w-[16px] shrink-0 rounded-full bg-[#1e73be]" />
        </div>
        <div className="h-[111px] bg-[#f5f6f7]" />
        <div className="h-[46px] border-t border-[#d0d0d0] bg-white" />
        <svg className="h-[21px] w-[9px]" viewBox="0 0 9 21" fill="none" stroke="#505050" strokeWidth="2">
          <path d="M0 8l3 3" />
        </svg>
        <div className="mr-px h-[21px] bg-[#cdcdcd]" />
        <div className="flex-1" />
        <svg className="h-[21px] w-[9px]" viewBox="0 0 9 21" fill="none" stroke="#505050" strokeWidth="2">
          <path d="M0 12l3-3" />
        </svg>
        <div className="h-[29px] border-b border-[#d0d0d0] bg-white" />
        <svg className="h-[29px] w-[9px]" viewBox="0 0 9 29" fill="#bcbcbc">
          <path d="M5 15h3v3H5zM1 19h3v3H1zM5 19h3v3H5zM1 23h3v3H1zM5 23h3v3H5z" />
        </svg>
      </div>
    </div>
  );
};

export default App;
